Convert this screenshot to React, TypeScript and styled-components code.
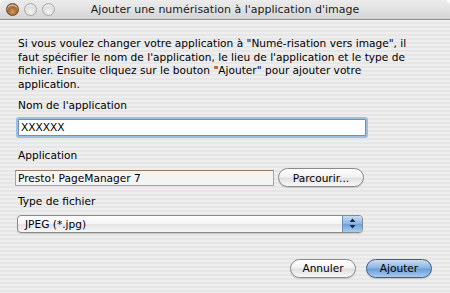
import React from 'react'
import styled, { createGlobalStyle } from 'styled-components'

const GlobalStyle = createGlobalStyle`
  html, body {
    margin: 0;
    padding: 0;
    background: #ffffff;
    overflow: hidden;
  }
`

const font = `"DejaVu Sans", "Liberation Sans", Arial, sans-serif`

const Window = styled.div`
  width: 450px;
  height: 293px;
  display: flex;
  flex-direction: column;
  font-family: ${font};
  color: #000;
  background: repeating-linear-gradient(
    to bottom,
    #eeeeee 0px,
    #eeeeee 2px,
    #e6e6e6 2px,
    #e6e6e6 4px
  );
  border-radius: 6px 6px 0 0;
  overflow: hidden;
`

const TitleBar = styled.div`
  height: 19px;
  display: grid;
  grid-template-columns: 1fr auto 1fr;
  align-items: center;
  background: linear-gradient(to bottom, #ececec 0%, #e2e2e2 50%, #d4d4d4 100%);
  border-bottom: 1px solid #8c8c8c;
  box-shadow: 0 1px 0 #f6f6f6;
`

const Lights = styled.div`
  display: flex;
  gap: 5px;
  padding-left: 6px;
`

const Light = styled.span<{ $active?: boolean }>`
  width: 13px;
  height: 13px;
  border-radius: 50%;
  box-sizing: border-box;
  border: 1px solid ${(p) => (p.$active ? '#6b4420' : '#a8a8a8')};
  background: ${(p) =>
    p.$active
      ? 'radial-gradient(circle at 50% 70%, #d19a5c 0%, #9c632e 55%, #6e4219 100%)'
      : 'radial-gradient(circle at 50% 70%, #f6f6f6 0%, #dcdcdc 55%, #c4c4c4 100%)'};
  box-shadow: inset 0 2px 1px rgba(255, 255, 255, 0.55);
`

const Title = styled.div`
  font-size: 11px;
  color: #1a1a1a;
  white-space: nowrap;
  padding-bottom: 1px;
`

const Content = styled.div`
  display: flex;
  flex-direction: column;
  padding: 17px 0 0 16px;
  font-size: 10.6px;
`

const Paragraph = styled.p`
  margin: 0 0 0 2px;
  line-height: 13.5px;
  white-space: nowrap;
`

const Label = styled.div<{ $top: number }>`
  margin: ${(p) => p.$top}px 0 6px 2px;
  line-height: 13.5px;
`

const FocusField = styled.div`
  width: 344px;
  height: 15px;
  margin-left: 2px;
  background: #fff;
  border: 1px solid #6d8fb8;
  box-shadow: 0 0 0 2px #9ebde3;
  border-radius: 1px;
  display: flex;
  align-items: center;
  padding-left: 2px;
`

const Row = styled.div`
  display: flex;
  align-items: center;
  gap: 4px;
`

const ReadField = styled.div`
  width: 255px;
  height: 14px;
  margin-left: -1px;
  background: #f4f4f2;
  border: 1px solid #b8a088;
  border-top-color: #8e7a66;
  display: flex;
  align-items: center;
  padding-left: 2px;
`

const PillButton = styled.button<{ $width: number; $primary?: boolean }>`
  width: ${(p) => p.$width}px;
  height: 19px;
  border-radius: 10px;
  box-sizing: border-box;
  padding: 0;
  font-family: ${font};
  font-size: 10.6px;
  color: #000;
  border: 1px solid ${(p) => (p.$primary ? '#3a5f8e' : '#8a8a8a')};
  background: ${(p) =>
    p.$primary
      ? 'linear-gradient(to bottom, #c9ddf2 0%, #8db6e2 45%, #6d9fd6 55%, #a8caee 100%)'
      : 'linear-gradient(to bottom, #ffffff 0%, #f2f2f2 45%, #e0e0e0 55%, #f8f8f8 100%)'};
  box-shadow: 0 1px 1px rgba(0, 0, 0, 0.15);
`

const Popup = styled.div`
  width: 346px;
  height: 18px;
  margin-left: 1px;
  box-sizing: border-box;
  border: 1px solid #8a8a8a;
  border-radius: 4px;
  display: flex;
  align-items: stretch;
  overflow: hidden;
  background: linear-gradient(to bottom, #ffffff 0%, #f4f4f4 50%, #e4e4e4 51%, #f6f6f6 100%);
  box-shadow: 0 1px 1px rgba(0, 0, 0, 0.15);
`

const PopupText = styled.div`
  flex: 1;
  display: flex;
  align-items: center;
  padding-left: 7px;
`

const PopupArrows = styled.div`
  width: 19px;
  border-left: 1px solid #6a8fbf;
  background: linear-gradient(to bottom, #c6dcf3 0%, #8cb6e4 48%, #6ea2d9 52%, #a9cbef 100%);
  display: flex;
  align-items: center;
  justify-content: center;
`

const Footer = styled.div`
  display: flex;
  justify-content: flex-end;
  gap: 10px;
  padding-right: 18px;
  margin-top: 26px;
`

export default function App() {
  return (
    <>
      <GlobalStyle />
      <Window>
        <TitleBar>
          <Lights>
            <Light $active />
            <Light />
            <Light />
          </Lights>
          <Title>Ajouter une numérisation à l'application d'image</Title>
          <span />
        </TitleBar>
        <Content>
          <Paragraph>
            Si vous voulez changer votre application à "Numé-risation vers image", il
            <br />
            faut spécifier le nom de l'application, le lieu de l'application et le type de
            <br />
            fichier. Ensuite cliquez sur le bouton "Ajouter" pour ajouter votre
            <br />
            application.
          </Paragraph>
          <Label $top={8}>Nom de l'application</Label>
          <FocusField>XXXXXX</FocusField>
          <Label $top={13}>Application</Label>
          <Row>
            <ReadField>Presto! PageManager 7</ReadField>
            <PillButton $width={86}>Parcourir...</PillButton>
          </Row>
          <Label $top={8}>Type de fichier</Label>
          <Popup>
            <PopupText>JPEG (*.jpg)</PopupText>
            <PopupArrows>
              <svg width="7" height="11" viewBox="0 0 7 11">
                <path d="M3.5 0.5 L6.5 4 L0.5 4 Z" fill="#1a2a40" />
                <path d="M3.5 10.5 L6.5 7 L0.5 7 Z" fill="#1a2a40" />
              </svg>
            </PopupArrows>
          </Popup>
          <Footer>
            <PillButton $width={66}>Annuler</PillButton>
            <PillButton $width={66} $primary>
              Ajouter
            </PillButton>
          </Footer>
        </Content>
      </Window>
    </>
  )
}
